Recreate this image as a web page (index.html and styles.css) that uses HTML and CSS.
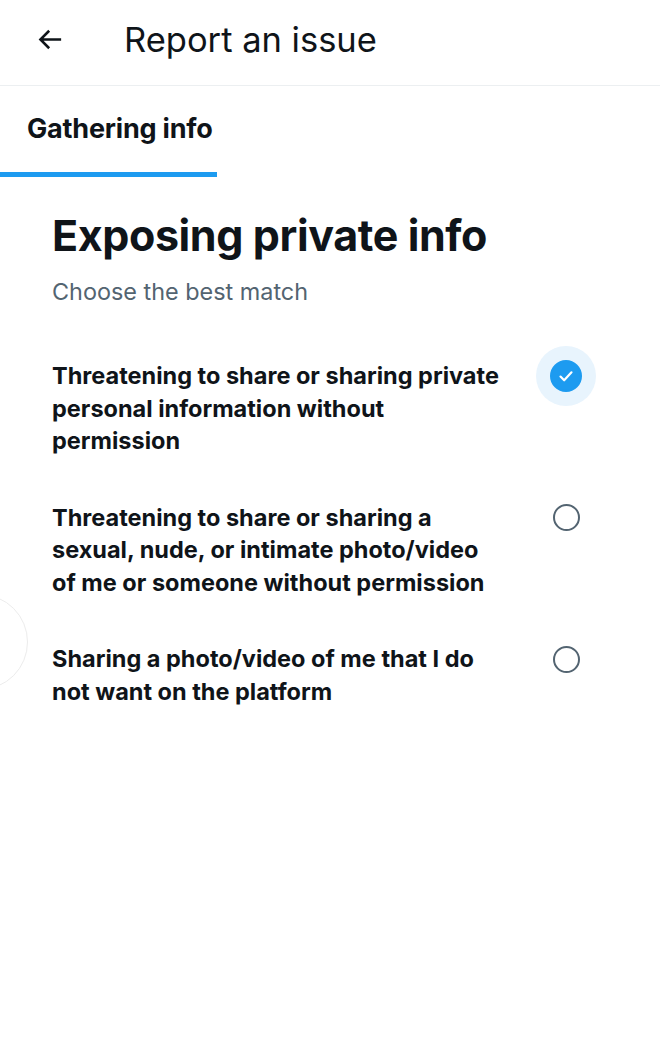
FILE: index.html
```html
<!DOCTYPE html>
<html lang="en">
<head>
<meta charset="utf-8">
<title>Report an issue</title>
<link rel="stylesheet" href="styles.css">
</head>
<body>
<div class="app">
  <header class="topbar">
    <button class="back" aria-label="Back">
      <svg viewBox="0 0 24 24" width="31" height="31"><path d="M7.414 13l5.043 5.04-1.414 1.42L3.586 12l7.457-7.46 1.414 1.42L7.414 11H21v2H7.414z" fill="#0f1419"/></svg>
    </button>
    <h1 class="title">Report an issue</h1>
  </header>
  <nav class="tabs">
    <div class="tab active">Gathering info</div>
  </nav>
  <main class="content">
    <h2 class="heading">Exposing private info</h2>
    <p class="sub">Choose the best match</p>
    <ul class="options">
      <li class="option">
        <span class="label">Threatening to share or sharing private personal information without permission</span>
        <span class="radio-wrap checked-wrap"><span class="radio checked">
          <svg viewBox="0 0 24 24" width="22" height="22"><path d="M6 12.6l4 4L18 8" fill="none" stroke="#fff" stroke-width="2.4" stroke-linecap="round" stroke-linejoin="round"/></svg>
        </span></span>
      </li>
      <li class="option">
        <span class="label">Threatening to share or sharing a sexual, nude, or intimate photo/video of me or someone without permission</span>
        <span class="radio-wrap"><span class="radio"></span></span>
      </li>
      <li class="option">
        <span class="label">Sharing a photo/video of me that I do not want on the platform</span>
        <span class="radio-wrap"><span class="radio"></span></span>
      </li>
    </ul>
  </main>
  <div class="float-handle"></div>
</div>
</body>
</html>
```

FILE: styles.css
```css
* { box-sizing: border-box; }
html, body { margin: 0; padding: 0; background: #fff; }
body {
  font-family: "Inter", "Liberation Sans", sans-serif;
  color: #0f1419;
  width: 660px;
  height: 1059px;
  overflow: hidden;
}
.app { position: relative; height: 1059px; }

.topbar {
  height: 86px;
  display: flex;
  align-items: center;
  border-bottom: 1px solid #eceff1;
  padding-bottom: 6px;
}
.back {
  border: 0;
  background: none;
  padding: 0;
  margin-left: 33px;
  width: 32px;
  height: 32px;
  display: flex;
  align-items: center;
  justify-content: center;
}
.title {
  margin: 0 0 0 59px;
  font-size: 34.5px;
  font-weight: 400;
}

.tabs {
  display: flex;
  height: 91px;
}
.tab {
  width: 217px;
  padding-left: 27px;
  font-size: 27px;
  font-weight: 700;
  letter-spacing: -0.2px;
  display: flex;
  align-items: center;
  border-bottom: 5px solid #1d9bf0;
  padding-bottom: 2px;
}

.content {
  padding: 30px 64px 0 52px;
}
.heading {
  margin: 0;
  font-size: 43px;
  font-weight: 700;
  line-height: 56px;
  letter-spacing: -0.4px;
}
.sub {
  margin: 14px 0 0;
  font-size: 23.4px;
  color: #536471;
  line-height: 30px;
}
.options {
  list-style: none;
  margin: 53px 0 0;
  padding: 0;
}
.option {
  display: flex;
  justify-content: space-between;
  align-items: flex-start;
  margin-bottom: 44px;
}
.label {
  width: 452px;
  font-size: 23.5px;
  font-weight: 700;
  line-height: 32.5px;
}
.radio-wrap {
  flex: none;
  width: 60px;
  height: 60px;
  margin-top: -14px;
  border-radius: 50%;
  display: flex;
  align-items: center;
  justify-content: center;
}
.checked-wrap { background: #e8f4fd; }
.radio {
  width: 27px;
  height: 27px;
  border-radius: 50%;
  border: 2.5px solid #536471;
  display: flex;
  align-items: center;
  justify-content: center;
}
.radio.checked {
  width: 32px;
  height: 32px;
  background: #1d9bf0;
  border-color: #1d9bf0;
}

.float-handle {
  position: absolute;
  left: -68px;
  top: 594px;
  width: 96px;
  height: 96px;
  border-radius: 50%;
  border: 1.5px solid #ececec;
  background: #fff;
}
```
